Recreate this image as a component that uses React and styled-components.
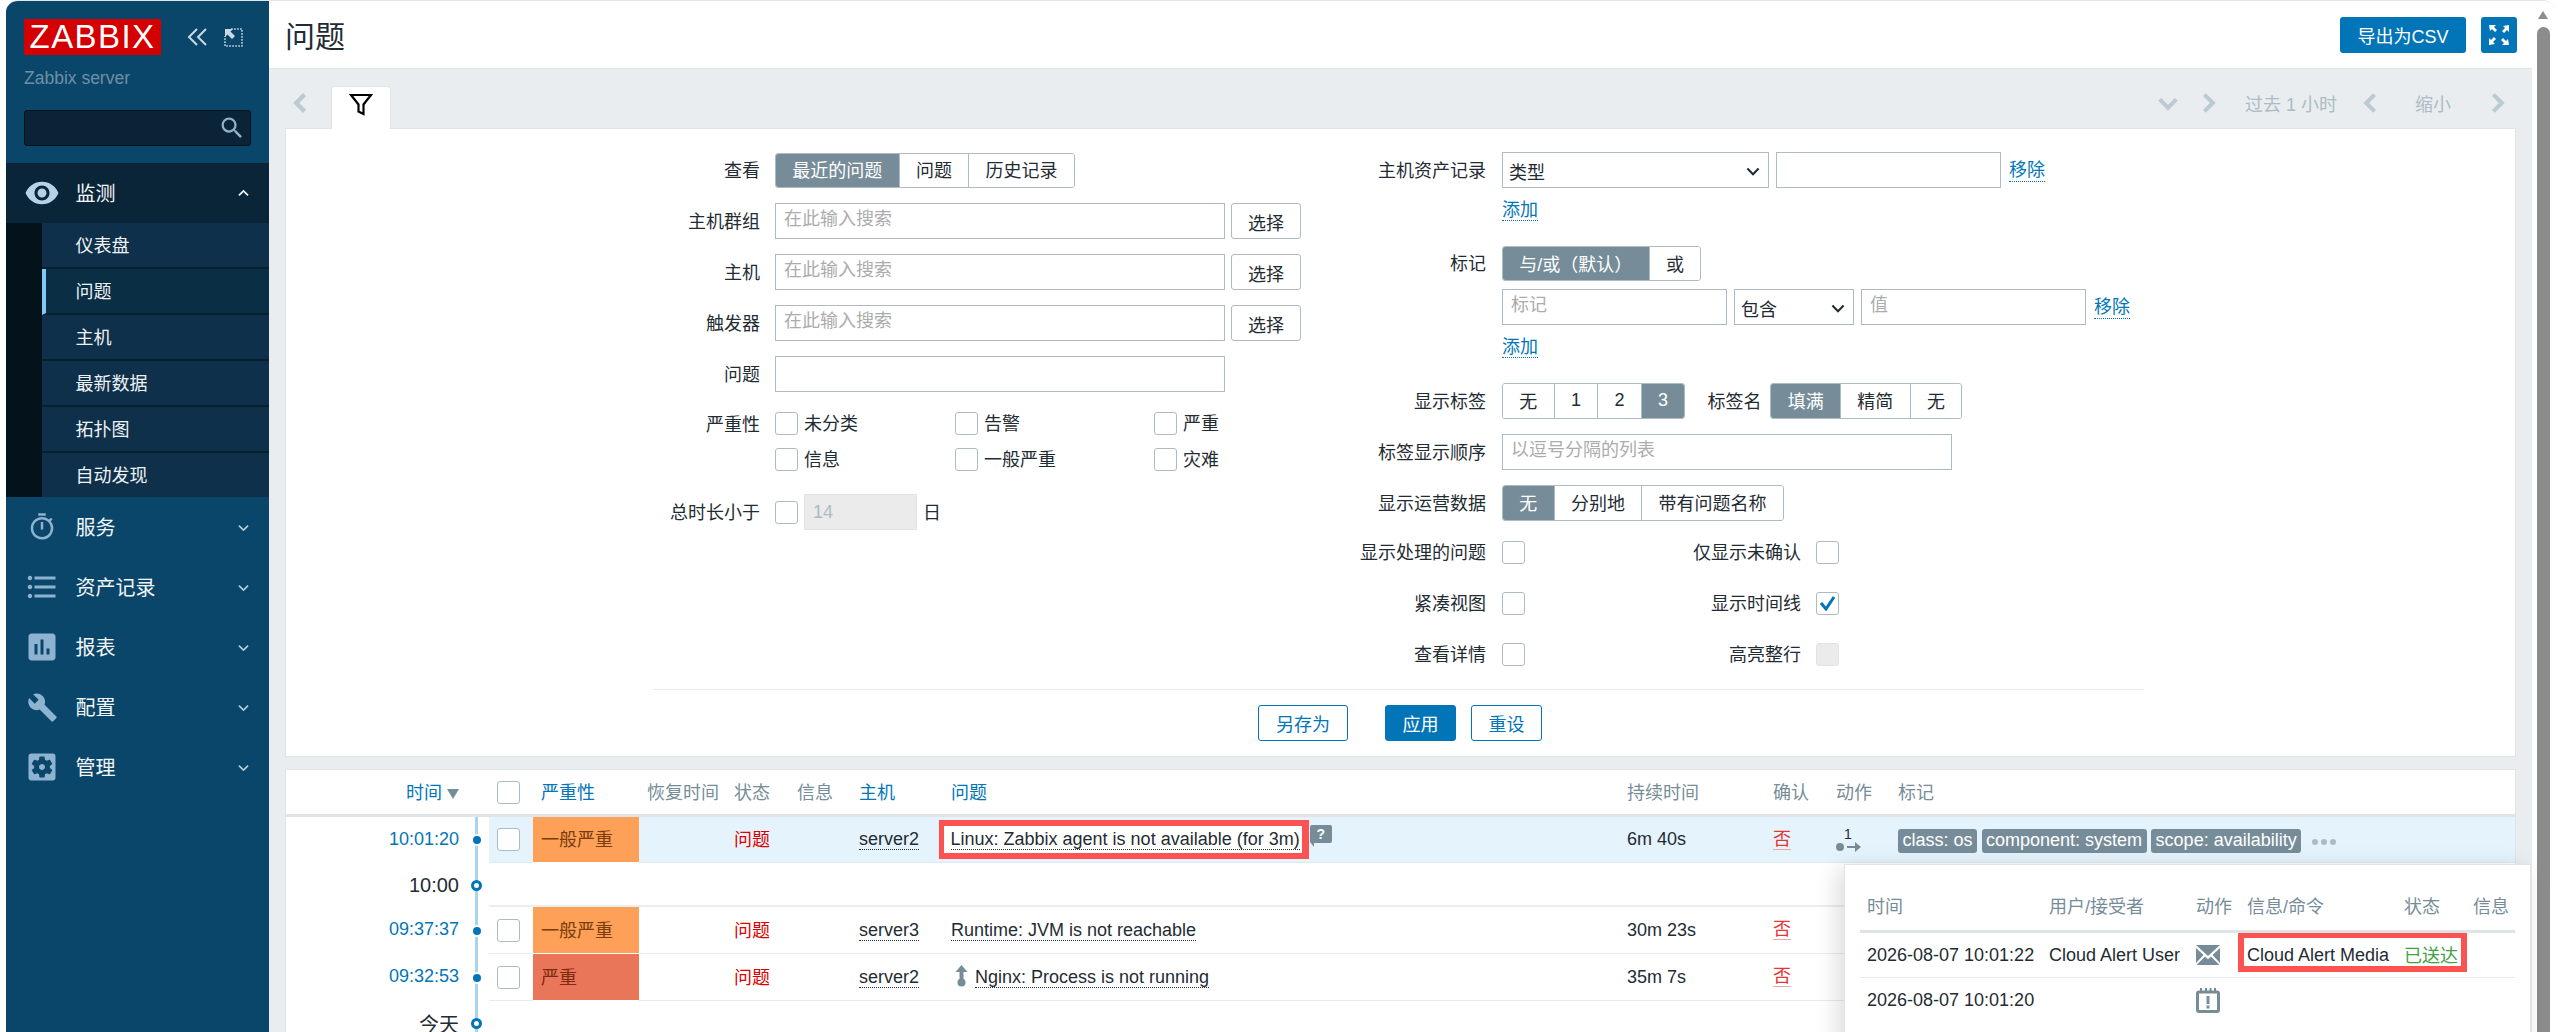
import React from "react";
import styled, { createGlobalStyle } from "styled-components";
import {
  MdVisibility,
  MdOutlineTimer,
  MdFormatListBulleted,
  MdAssessment,
  MdBuild,
  MdSettingsApplications,
  MdSearch,
} from "react-icons/md";

const Global = createGlobalStyle`
  html, body { margin: 0; padding: 0; background: #fff; overflow: hidden; }
  body { font-family: "Liberation Sans", "Noto Sans CJK SC", sans-serif; font-size: 18px; color: #1f2c33; }
  * { box-sizing: border-box; }
`;

const Win = styled.div`
  display: flex;
  height: 1032px;
  margin: 0 4px 0 6px;
  border-top: 1px solid #e3e7ea;
  border-radius: 12px 12px 0 0;
  overflow: hidden;
  position: relative;
`;

/* Sidebar */
const Side = styled.aside`
  width: 263px;
  flex: none;
  background: #0a466a;
  display: flex;
  flex-direction: column;
`;
const Brand = styled.div`
  height: 162px;
  padding: 18px 18px 0 18px;
`;
const BrandTop = styled.div`
  display: flex;
  align-items: center;
`;
const Logo = styled.div`
  width: 137px;
  height: 36px;
  background: #d40000;
  color: #fff;
  font-size: 33px;
  line-height: 36px;
  letter-spacing: 1.4px;
  text-align: center;
`;
const Server = styled.div`
  margin-top: 13px;
  color: #6f8fa6;
  font-size: 17.5px;
  line-height: 20px;
`;
const Search = styled.div`
  margin-top: 22px;
  width: 227px;
  height: 36px;
  background: #0a2336;
  border: 1px solid #02101a;
  border-radius: 3px;
  display: flex;
  justify-content: flex-end;
  align-items: center;
  padding-right: 4px;
  color: #8fb0c6;
`;
const MenuRow = styled.div`
  height: 60px;
  flex: none;
  display: flex;
  align-items: center;
  padding-left: 16px;
  padding-right: 19px;
  background: ${(p) => (p.$open ? "#0a2537" : "transparent")};
  color: #f2f5f7;
  font-size: 20px;
`;
const MenuIcon = styled.span`
  width: 40px;
  display: flex;
  justify-content: center;
  align-items: center;
  margin-right: 13.5px;
  color: ${(p) => (p.$open ? "#b5d3e8" : "#8db3d0")};
`;
const MenuText = styled.span`
  flex: 1;
  padding-bottom: 2px;
`;
const Sub = styled.div`
  background: #04131b;
  padding-left: 36px;
`;
const SubItem = styled.div`
  height: ${(p) => (p.$last ? "44px" : "46px")};
  display: flex;
  align-items: center;
  padding-left: ${(p) => (p.$on ? "29.500px" : "33.500px")};
  padding-bottom: 3px;
  background: ${(p) => (p.$on ? "#0a2e44" : "#0e304a")};
  border-left: ${(p) => (p.$on ? "4px solid #84c8f8" : "0")};
  border-bottom: ${(p) => (p.$last ? "0" : "2px solid #06202f")};
  color: #eef2f5;
  font-size: 18px;
`;

/* Main */
const Main = styled.main`
  flex: 1;
  min-width: 0;
  display: flex;
  flex-direction: column;
  background: #e9edf0;
`;
const Header = styled.header`
  height: 68px;
  flex: none;
  background: #fff;
  border-bottom: 1px solid #dfe4e7;
  display: flex;
  align-items: center;
  padding: 0 15px 0 16px;
  gap: 15px;
`;
const Title = styled.h1`
  flex: 1;
  margin: 0 0 2px;
  font-size: 30px;
  font-weight: 400;
  color: #1f2c33;
`;
const PrimaryBtn = styled.button`
  height: 36px;
  width: ${(p) => p.$w || "auto"};
  padding: 0;
  border: 0;
  border-radius: 3px;
  background: #0275b8;
  color: #fff;
  font: inherit;
  font-size: 18px;
  display: flex;
  align-items: center;
  justify-content: center;
`;
const Content = styled.div`
  flex: 1;
  padding: 0 16px;
  min-height: 0;
`;
const TabRow = styled.div`
  height: 59px;
  padding-top: 17px;
  display: flex;
  align-items: flex-start;
`;
const TabArrow = styled.span`
  width: 46px;
  height: 34px;
  display: flex;
  align-items: center;
  padding-left: 4px;
`;
const Tab = styled.div`
  width: 60px;
  height: 43px;
  margin-bottom: -1px;
  background: #fff;
  border: 1px solid #dfe4e7;
  border-bottom: 0;
  border-radius: 3px 3px 0 0;
  display: flex;
  justify-content: center;
  padding-top: 5px;
  position: relative;
  z-index: 1;
`;
const TimeNav = styled.div`
  margin-left: auto;
  height: 34px;
  display: flex;
  align-items: center;
  padding-right: 7px;
  color: #acbbc4;
  font-size: 18px;
`;
const NavItem = styled.span`
  margin-left: ${(p) => p.$ml || 0}px;
  display: flex;
  align-items: center;
  padding-bottom: 1px;
`;
const FilterPanel = styled.section`
  height: 629px;
  background: #fff;
  border: 1px solid #dfe4e7;
  display: flex;
  flex-direction: column;
`;
const Columns = styled.div`
  display: grid;
  grid-template-columns: 666px 1fr;
  padding: 23px 0 0 354px;
  height: 560px;
`;
const Col = styled.div`
  display: flex;
  flex-direction: column;
`;
const FormRow = styled.div`
  display: grid;
  grid-template-columns: ${(p) => (p.$right ? "180px 1fr" : "120px 1fr")};
  column-gap: ${(p) => (p.$right ? "16px" : "15px")};
  margin-top: ${(p) => p.$mt || 0}px;
  min-height: ${(p) => p.$h || 36}px;
  align-items: ${(p) => (p.$top ? "start" : "center")};
`;
const Label = styled.label`
  text-align: right;
  font-size: 18px;
  padding-bottom: 3px;
  line-height: ${(p) => (p.$lh ? p.$lh + "px" : "normal")};
  color: #1f2c33;
`;
const Ctrl = styled.div`
  display: flex;
  align-items: center;
  gap: ${(p) => p.$gap ?? 6}px;
`;
const Seg = styled.div`
  display: inline-flex;
  height: ${(p) => p.$h || 36}px;
  border: 1px solid #acbbc4;
  border-radius: 3px;
  overflow: hidden;
`;
const SegItem = styled.span`
  padding: 0 ${(p) => p.$pad ?? 16.3}px 2px;
  display: flex;
  align-items: center;
  font-size: 18px;
  background: ${(p) => (p.$on ? "#768d99" : "#fff")};
  color: ${(p) => (p.$on ? "#fff" : "#1f2c33")};
  border-right: 1px solid #acbbc4;
  &:last-child { border-right: 0; }
`;
const Input = styled.input`
  width: ${(p) => p.$w}px;
  height: 36px;
  padding: 0 8px 3px;
  border: 1px solid #acbbc4;
  background: #fff;
  font: inherit;
  font-size: 18px;
  color: #1f2c33;
  &::placeholder { color: #acacac; opacity: 1; }
  &:disabled { background: #ebebeb; border-color: #dfe4e7; color: #acbbc4; padding-bottom: 0; }
`;
const GhostBtn = styled.button`
  width: ${(p) => p.$w || 70}px;
  height: 36px;
  padding: 2px 0 0;
  border: 1px solid #acbbc4;
  border-radius: 3px;
  background: #fff;
  font: inherit;
  font-size: 18px;
  color: #1f2c33;
`;
const Box = styled.span`
  width: 23px;
  height: 23px;
  flex: none;
  border: 1px solid #acbbc4;
  border-radius: 3px;
  background: ${(p) => (p.$off ? "#ebebeb" : "#fff")};
  ${(p) => (p.$off ? "border-color:#dfe4e7;" : "")}
  display: flex;
  align-items: center;
  justify-content: center;
`;
const SevGrid = styled.div`
  display: grid;
  grid-template-columns: 180px 199px 1fr;
  row-gap: 13px;
  padding-top: 5px;
`;
const SevItem = styled.span`
  display: flex;
  align-items: center;
  gap: 6px;
  height: 23px;
  font-size: 18px;
`;
const SevText = styled.span`
  padding-bottom: 3px;
`;
const SelectBox = styled.div`
  width: ${(p) => p.$w}px;
  height: 36px;
  border: 1px solid #acbbc4;
  background: #fff;
  display: flex;
  align-items: center;
  justify-content: space-between;
  padding: 2px 7px 0 6px;
  font-size: 18px;
`;
const Link = styled.a`
  color: #0275b8;
  font-size: 18px;
  line-height: 22px;
  border-bottom: 1px dotted #0275b8;
  margin-left: ${(p) => p.$ml || 0}px;
`;
const AddRow = styled.div`
  margin: ${(p) => p.$mt}px 0 0 196px;
  height: 22px;
  display: flex;
`;
const InlineLabel = styled.span`
  font-size: 18px;
  padding-bottom: 3px;
  margin: 0 9px 0 22px;
`;
const CheckRow = styled.div`
  display: flex;
  width: 337px;
  align-items: center;
  height: 35px;
`;
const Check2Label = styled.span`
  flex: 1;
  text-align: right;
  padding: 0 15px 3px 0;
  font-size: 18px;
`;
const Footer = styled.div`
  width: 1491px;
  margin-left: 367px;
  border-top: 1px solid #e9ebed;
  padding: 15px 0 0 3px;
  display: flex;
  justify-content: center;
`;
const OutBtn = styled.button`
  width: ${(p) => p.$w}px;
  height: 36px;
  padding: 0;
  margin-left: ${(p) => p.$ml || 0}px;
  border: 1px solid #0275b8;
  border-radius: 3px;
  background: ${(p) => (p.$fill ? "#0275b8" : "#fff")};
  color: ${(p) => (p.$fill ? "#fff" : "#0275b8")};
  font: inherit;
  font-size: 18px;
`;

/* Problem list */
const ListPanel = styled.section`
  margin-top: 12px;
  height: 300px;
  background: #fff;
  border: 1px solid #dfe4e7;
  border-bottom: 0;
  position: relative;
`;
const COLS = "173px 30px 44px 106px 87px 63px 62px 92px 676px 146px 63px 62px 1fr";
const HeadRow = styled.div`
  display: grid;
  grid-template-columns: ${COLS};
  height: 47px;
  border-bottom: 3px solid #dfe4e7;
  align-items: center;
`;
const Th = styled.span`
  padding-left: ${(p) => (p.$flush ? 0 : 8)}px;
  padding-bottom: 2px;
  font-size: 18px;
  color: ${(p) => (p.$sort ? "#0275b8" : "#768d99")};
  white-space: nowrap;
  ${(p) => (p.$end ? "text-align:right;" : "")}
`;
const Row = styled.div`
  display: grid;
  grid-template-columns: ${COLS};
  height: ${(p) => p.$h}px;
  align-items: stretch;
`;
const TimeCell = styled.span`
  text-align: right;
  align-self: center;
  font-size: ${(p) => (p.$big ? 20 : 18)}px;
  padding-bottom: ${(p) => (p.$big ? 0 : 2)}px;
  color: ${(p) => (p.$big ? "#1f2c33" : "#0275b8")};
`;
const Line = styled.span`
  position: relative;
  display: flex;
  align-items: center;
  &::before {
    content: "";
    position: absolute;
    left: 16px;
    top: 0;
    bottom: 0;
    width: 3px;
    background: #a9d4ec;
  }
`;
const Dot = styled.i`
  position: relative;
  margin-left: ${(p) => (p.$big ? 12 : 13.5)}px;
  width: ${(p) => (p.$big ? 11 : 8)}px;
  height: ${(p) => (p.$big ? 11 : 8)}px;
  border-radius: 50%;
  background: ${(p) => (p.$big ? "#fff" : "#0275b8")};
  border: ${(p) => (p.$big ? "3px solid #0275b8" : "0")};
  box-shadow: ${(p) => (p.$big ? "none" : "0 0 0 2px #fff")};
`;
const Cell = styled.span`
  padding-left: 8px;
  display: flex;
  align-items: center;
  font-size: 18px;
  white-space: nowrap;
  background: ${(p) => (p.$hl ? "#e5f3fd" : "transparent")};
  border-bottom: 1px solid ${(p) => (p.$hl ? "#dfe9f0" : "#e8ebed")};
  color: ${(p) => p.$color || "inherit"};
`;
const CjkText = styled.span`
  padding-bottom: 3px;
`;
const BlankCell = styled.span`
  grid-column: 3 / -1;
  border-bottom: 2px solid #ebeef0;
`;
const SevCell = styled(Cell)`
  background: ${(p) => p.$bg};
  color: ${(p) => p.$fg};
  border-bottom: 1px solid #fff;
`;
const Dotted = styled.a`
  border-bottom: 1px dotted #1f2c33;
  line-height: 20px;
  color: #1f2c33;
`;
const RedMark = styled.span`
  display: inline-flex;
  align-items: center;
  height: 39px;
  margin-left: -12px;
  padding: 0 2px 0 6.5px;
  border: solid #fd5252;
  border-width: 6px 7px 6px 5px;
  background: #fff;
`;
const Hint = styled.span`
  position: relative;
  margin: -12px 0 0 1px;
  width: 22px;
  height: 18px;
  background: #768d99;
  color: #fff;
  border-radius: 2px;
  font-size: 14px;
  font-weight: 700;
  line-height: 18px;
  text-align: center;
  &::after {
    content: "";
    position: absolute;
    left: 0;
    bottom: -4px;
    border-top: 5px solid #768d99;
    border-left: 4px solid transparent;
  }
`;
const No = styled.span`
  color: #e33734;
  border-bottom: 1px solid #e9a9a8;
  line-height: 20px;
  margin-top: -1px;
`;
const Tag = styled.span`
  height: 24px;
  padding: 0 4.5px;
  margin-right: 4.5px;
  margin-top: 3px;
  background: #768d99;
  color: #fff;
  border-radius: 3px;
  font-size: 18px;
  line-height: 22px;
`;
const Act = styled.span`
  width: 24px;
  display: flex;
  flex-direction: column;
  align-items: center;
  font-size: 14px;
  line-height: 14px;
  color: #1f2c33;
`;
const More = styled.span`
  display: flex;
  gap: 3px;
  margin-left: 6px;
  margin-top: 5px;
`;
const MoreDot = styled.i`
  width: 6px;
  height: 6px;
  border-radius: 50%;
  background: #acbbc4;
`;

/* Popup */
const POP = "182px 147px 51px 157px 69px 50px";
const Popup = styled.div`
  position: absolute;
  left: 1558px;
  top: 94px;
  width: 687px;
  height: 240px;
  background: #fff;
  border: 1px solid #dfe4e7;
  padding: 25px 15px 0 15px;
  box-shadow: -6px 4px 22px rgba(0, 0, 0, 0.14);
  z-index: 3;
`;
const PopHead = styled.div`
  display: grid;
  grid-template-columns: ${POP};
  height: 43px;
  padding: 2px 0 0 7px;
  border-bottom: 3px solid #dfe4e7;
  color: #768d99;
  font-size: 18px;
`;
const PopHeadCell = styled.span`
  white-space: nowrap;
`;
const PopRow = styled.div`
  display: grid;
  grid-template-columns: ${POP};
  height: ${(p) => p.$h}px;
  align-items: center;
  padding-left: 7px;
  border-bottom: ${(p) => (p.$line ? "1px solid #e8ebed" : "0")};
  font-size: 18px;
  white-space: nowrap;
`;
const Sent = styled.span`
  color: #3fa33f;
  padding-bottom: 3px;
`;
const PopRed = styled.div`
  position: absolute;
  left: 393px;
  top: 68px;
  width: 229px;
  height: 39px;
  border: 6px solid #fd5252;
  border-width: 5px 6px 6px 6px;
  pointer-events: none;
`;

/* Scrollbar */
const Scroll = styled.div`
  width: 23px;
  flex: none;
  background: #fff;
  padding-left: 5px;
  display: flex;
  flex-direction: column;
`;
const ScrollUp = styled.span`
  margin: 10px 0 0 1px;
  width: 0;
  height: 0;
  border-left: 5.5px solid transparent;
  border-right: 5.5px solid transparent;
  border-bottom: 8px solid #8c8c8c;
`;
const Thumb = styled.span`
  margin-top: 8px;
  width: 13px;
  flex: 1;
  background: #8c8c8c;
  border-radius: 7px 7px 0 0;
`;

const Chev = ({ dir = "down", c = "#bccad2", s = 24, w = 3.4 }) => {
  const d = {
    down: "M3 7l7 7 7-7",
    up: "M3 13l7-7 7 7",
    left: "M13 3l-7 7 7 7",
    right: "M7 3l7 7-7 7",
  }[dir];
  return (
    <svg width={s} height={s} viewBox="0 0 20 20" fill="none" stroke={c} strokeWidth={w}>
      <path d={d} />
    </svg>
  );
};

const menus = [
  { t: "服务", I: MdOutlineTimer, s: 30 },
  { t: "资产记录", I: MdFormatListBulleted, s: 36 },
  { t: "报表", I: MdAssessment, s: 36 },
  { t: "配置", I: MdBuild, s: 31 },
  { t: "管理", I: MdSettingsApplications, s: 36 },
];
const subs = ["仪表盘", "问题", "主机", "最新数据", "拓扑图", "自动发现"];

const MenuChev = ({ dir }) => <Chev dir={dir} c={dir === "up" ? "#f2f5f7" : "#b5cad8"} s={13} w={2.6} />;

export default function App() {
  return (
    <>
      <Global />
      <Win>
        <Side>
          <Brand>
            <BrandTop>
              <Logo>ZABBIX</Logo>
              <svg style={{ marginLeft: 25 }} width="22" height="20" viewBox="0 0 22 20" fill="none" stroke="#c9d8e2" strokeWidth="2">
                <path d="M11 2L3 10l8 8M20 2l-8 8 8 8" />
              </svg>
              <svg style={{ marginLeft: 16 }} width="19" height="19" viewBox="0 0 19 19" fill="none">
                <path d="M7 1h11v17H1V8" stroke="#b9ccd9" strokeWidth="1.6" strokeDasharray="1.8 1.2" />
                <path d="M1 1h8L6.5 3.5 11 8l-3 3-4.5-4.5L1 9z" fill="#c9d8e2" />
              </svg>
            </BrandTop>
            <Server>Zabbix server</Server>
            <Search>
              <MdSearch size={28} />
            </Search>
          </Brand>
          <MenuRow $open>
            <MenuIcon $open>
              <MdVisibility size={36} />
            </MenuIcon>
            <MenuText>监测</MenuText>
            <MenuChev dir="up" />
          </MenuRow>
          <Sub>
            {subs.map((s, i) => (
              <SubItem key={s} $on={i === 1} $last={i === subs.length - 1}>
                {s}
              </SubItem>
            ))}
          </Sub>
          {menus.map(({ t, I, s }) => (
            <MenuRow key={t}>
              <MenuIcon>
                <I size={s} />
              </MenuIcon>
              <MenuText>{t}</MenuText>
              <MenuChev dir="down" />
            </MenuRow>
          ))}
        </Side>
        <Main>
          <Header>
            <Title>问题</Title>
            <PrimaryBtn $w="126px">导出为CSV</PrimaryBtn>
            <PrimaryBtn $w="36px">
              <svg width="22" height="22" viewBox="0 0 22 22" fill="#fff">
                <path d="M1 1h7L6 3l3 3-2 2-3-3-2 2zM21 1v7l-2-2-3 3-2-2 3-3-2-2zM1 21v-7l2 2 3-3 2 2-3 3 2 2zM21 21h-7l2-2-3-3 2-2 3 3 2-2z" />
              </svg>
            </PrimaryBtn>
          </Header>
          <Content>
            <TabRow>
              <TabArrow>
                <Chev dir="left" s={24} w={3.6} />
              </TabArrow>
              <Tab>
                <svg width="24" height="24" viewBox="0 0 24 24" fill="none" stroke="#000" strokeWidth="2.2">
                  <path d="M2 3h20l-7.500 9.500V22l-5-2.500v-7z" />
                </svg>
              </Tab>
              <TimeNav>
                <Chev dir="down" />
                <NavItem $ml={16}>
                  <Chev dir="right" />
                </NavItem>
                <NavItem $ml={25}>过去 1 小时</NavItem>
                <NavItem $ml={22}>
                  <Chev dir="left" />
                </NavItem>
                <NavItem $ml={32}>缩小</NavItem>
                <NavItem $ml={34}>
                  <Chev dir="right" />
                </NavItem>
              </TimeNav>
            </TabRow>
            <FilterPanel>
              <Columns>
                <Col>
                  <FormRow>
                    <Label>查看</Label>
                    <Ctrl>
                      <Seg $h={35}>
                        <SegItem $on>最近的问题</SegItem>
                        <SegItem>问题</SegItem>
                        <SegItem>历史记录</SegItem>
                      </Seg>
                    </Ctrl>
                  </FormRow>
                  {["主机群组", "主机", "触发器"].map((l) => (
                    <FormRow key={l} $mt={15}>
                      <Label>{l}</Label>
                      <Ctrl>
                        <Input $w={450} placeholder="在此输入搜索" />
                        <GhostBtn>选择</GhostBtn>
                      </Ctrl>
                    </FormRow>
                  ))}
                  <FormRow $mt={15}>
                    <Label>问题</Label>
                    <Ctrl>
                      <Input $w={450} />
                    </Ctrl>
                  </FormRow>
                  <FormRow $mt={15} $h={72} $top>
                    <Label $lh={36}>严重性</Label>
                    <SevGrid>
                      {["未分类", "告警", "严重", "信息", "一般严重", "灾难"].map((t) => (
                        <SevItem key={t}>
                          <Box />
                          <SevText>{t}</SevText>
                        </SevItem>
                      ))}
                    </SevGrid>
                  </FormRow>
                  <FormRow $mt={15}>
                    <Label>总时长小于</Label>
                    <Ctrl>
                      <Box />
                      <Input $w={113} disabled value="14" readOnly />
                      <SevText>日</SevText>
                    </Ctrl>
                  </FormRow>
                </Col>
                <Col>
                  <FormRow $right>
                    <Label>主机资产记录</Label>
                    <Ctrl $gap={7}>
                      <SelectBox $w={267}>
                        类型
                        <Chev dir="down" c="#1f2c33" s={16} w={2.6} />
                      </SelectBox>
                      <Input $w={225} />
                      <Link $ml={1}>移除</Link>
                    </Ctrl>
                  </FormRow>
                  <AddRow $mt={11}>
                    <Link>添加</Link>
                  </AddRow>
                  <FormRow $right $mt={25} $h={35}>
                    <Label>标记</Label>
                    <Ctrl>
                      <Seg $h={35}>
                        <SegItem $on>与/或（默认）</SegItem>
                        <SegItem>或</SegItem>
                      </Seg>
                    </Ctrl>
                  </FormRow>
                  <FormRow $right $mt={8}>
                    <span />
                    <Ctrl $gap={7}>
                      <Input $w={225} placeholder="标记" />
                      <SelectBox $w={120}>
                        包含
                        <Chev dir="down" c="#1f2c33" s={16} w={2.6} />
                      </SelectBox>
                      <Input $w={225} placeholder="值" />
                      <Link $ml={1}>移除</Link>
                    </Ctrl>
                  </FormRow>
                  <AddRow $mt={11}>
                    <Link>添加</Link>
                  </AddRow>
                  <FormRow $right $mt={25}>
                    <Label>显示标签</Label>
                    <Ctrl $gap={0}>
                      <Seg>
                        <SegItem>无</SegItem>
                        <SegItem>1</SegItem>
                        <SegItem>2</SegItem>
                        <SegItem $on>3</SegItem>
                      </Seg>
                      <InlineLabel>标签名</InlineLabel>
                      <Seg>
                        <SegItem $on>填满</SegItem>
                        <SegItem>精简</SegItem>
                        <SegItem>无</SegItem>
                      </Seg>
                    </Ctrl>
                  </FormRow>
                  <FormRow $right $mt={15}>
                    <Label>标签显示顺序</Label>
                    <Ctrl>
                      <Input $w={450} placeholder="以逗号分隔的列表" />
                    </Ctrl>
                  </FormRow>
                  <FormRow $right $mt={15}>
                    <Label>显示运营数据</Label>
                    <Ctrl>
                      <Seg>
                        <SegItem $on>无</SegItem>
                        <SegItem>分别地</SegItem>
                        <SegItem>带有问题名称</SegItem>
                      </Seg>
                    </Ctrl>
                  </FormRow>
                  <FormRow $right $mt={14} $h={35}>
                    <Label>显示处理的问题</Label>
                    <CheckRow>
                      <Box />
                      <Check2Label>仅显示未确认</Check2Label>
                      <Box />
                    </CheckRow>
                  </FormRow>
                  <FormRow $right $mt={16} $h={35}>
                    <Label>紧凑视图</Label>
                    <CheckRow>
                      <Box />
                      <Check2Label>显示时间线</Check2Label>
                      <Box>
                        <svg width="17" height="15" viewBox="0 0 17 15" fill="none" stroke="#0275b8" strokeWidth="3">
                          <path d="M2 7l5 6 8-12" />
                        </svg>
                      </Box>
                    </CheckRow>
                  </FormRow>
                  <FormRow $right $mt={16} $h={35}>
                    <Label>查看详情</Label>
                    <CheckRow>
                      <Box />
                      <Check2Label>高亮整行</Check2Label>
                      <Box $off />
                    </CheckRow>
                  </FormRow>
                </Col>
              </Columns>
              <Footer>
                <OutBtn $w={90}>另存为</OutBtn>
                <OutBtn $w={71} $ml={37} $fill>
                  应用
                </OutBtn>
                <OutBtn $w={71} $ml={15}>
                  重设
                </OutBtn>
              </Footer>
            </FilterPanel>
            <ListPanel>
              <HeadRow>
                <Th $flush $end $sort>
                  时间{" "}
                  <svg width="12" height="10" viewBox="0 0 12 10" fill="#768d99">
                    <path d="M0 0h12L6 10z" />
                  </svg>
                </Th>
                <span />
                <Th>
                  <Box style={{ display: "block", marginTop: 2 }} />
                </Th>
                <Th $sort>严重性</Th>
                <Th>恢复时间</Th>
                <Th>状态</Th>
                <Th>信息</Th>
                <Th $sort>主机</Th>
                <Th $sort>问题</Th>
                <Th>持续时间</Th>
                <Th>确认</Th>
                <Th>动作</Th>
                <Th>标记</Th>
              </HeadRow>
              <Row $h={46}>
                <TimeCell>10:01:20</TimeCell>
                <Line>
                  <Dot />
                </Line>
                <Cell $hl>
                  <Box />
                </Cell>
                <SevCell $bg="#ffa059" $fg="#7a3c08">
                  <CjkText>一般严重</CjkText>
                </SevCell>
                <Cell $hl />
                <Cell $hl $color="#dc0000">
                  <CjkText>问题</CjkText>
                </Cell>
                <Cell $hl />
                <Cell $hl>
                  <Dotted>server2</Dotted>
                </Cell>
                <Cell $hl>
                  <RedMark>
                    <Dotted>Linux: Zabbix agent is not available (for 3m)</Dotted>
                  </RedMark>
                  <Hint>?</Hint>
                </Cell>
                <Cell $hl>6m 40s</Cell>
                <Cell $hl>
                  <No>否</No>
                </Cell>
                <Cell $hl>
                  <Act>
                    1
                    <svg width="26" height="12" viewBox="0 0 26 12" fill="#768d99">
                      <circle cx="5" cy="6" r="4" />
                      <path d="M12 5h8V1l6 5-6 5V7h-8z" />
                    </svg>
                  </Act>
                </Cell>
                <Cell $hl>
                  <Tag>class: os</Tag>
                  <Tag>component: system</Tag>
                  <Tag>scope: availability</Tag>
                  <More>
                    <MoreDot />
                    <MoreDot />
                    <MoreDot />
                  </More>
                </Cell>
              </Row>
              <Row $h={44}>
                <TimeCell $big>10:00</TimeCell>
                <Line>
                  <Dot $big />
                </Line>
                <BlankCell />
              </Row>
              {[
                ["09:37:37", "一般严重", "#ffa059", "#7a3c08", "server3", "Runtime: JVM is not reachable", "30m 23s", false],
                ["09:32:53", "严重", "#e97659", "#7e2a10", "server2", "Nginx: Process is not running", "35m 7s", true],
              ].map(([time, sev, bg, fg, host, prob, dur, up]) => (
                <Row key={time} $h={47}>
                  <TimeCell>{time}</TimeCell>
                  <Line>
                    <Dot />
                  </Line>
                  <Cell>
                    <Box />
                  </Cell>
                  <SevCell $bg={bg} $fg={fg}>
                    <CjkText>{sev}</CjkText>
                  </SevCell>
                  <Cell />
                  <Cell $color="#dc0000">
                    <CjkText>问题</CjkText>
                  </Cell>
                  <Cell />
                  <Cell>
                    <Dotted>{host}</Dotted>
                  </Cell>
                  <Cell>
                    {up && (
                      <svg style={{ margin: "-2px 7px 0 4px" }} width="13" height="22" viewBox="0 0 13 22" fill="#768d99">
                        <path d="M6.500 0l6 7H8.500v8h-4V7H.5z" />
                        <circle cx="6.500" cy="17.500" r="4" />
                      </svg>
                    )}
                    <Dotted>{prob}</Dotted>
                  </Cell>
                  <Cell>{dur}</Cell>
                  <Cell>
                    <No>否</No>
                  </Cell>
                  <Cell />
                  <Cell />
                </Row>
              ))}
              <Row $h={44}>
                <TimeCell $big>今天</TimeCell>
                <Line>
                  <Dot $big />
                </Line>
              </Row>
              <Popup>
                <PopHead>
                  <PopHeadCell>时间</PopHeadCell>
                  <PopHeadCell>用户/接受者</PopHeadCell>
                  <PopHeadCell>动作</PopHeadCell>
                  <PopHeadCell>信息/命令</PopHeadCell>
                  <PopHeadCell>状态</PopHeadCell>
                  <PopHeadCell>信息</PopHeadCell>
                </PopHead>
                <PopRow $h={45} $line>
                  <span>2026-08-07 10:01:22</span>
                  <span>Cloud Alert User</span>
                  <svg width="24" height="20" viewBox="0 0 24 20" fill="#768d99">
                    <path d="M0 0h24L12 11zM0 3l7.500 7L0 18zM24 3l-7.500 7L24 18zM9 11.500l3 2.800 3-2.800 8.500 8.500H.5z" />
                  </svg>
                  <span>Cloud Alert Media</span>
                  <Sent>已送达</Sent>
                  <span />
                </PopRow>
                <PopRow $h={44}>
                  <span>2026-08-07 10:01:20</span>
                  <span />
                  <svg width="24" height="25" viewBox="0 0 24 25" fill="none">
                    <rect x="1.500" y="4" width="21" height="19.500" rx="1.500" stroke="#768d99" strokeWidth="3" />
                    <path d="M5 0v4M10 0v4M14.500 0v4M19 0v4" stroke="#768d99" strokeWidth="2" />
                    <path d="M12 8v8M12 17.500v3" stroke="#768d99" strokeWidth="3" />
                  </svg>
                  <span />
                  <span />
                  <span />
                </PopRow>
                <PopRed />
              </Popup>
            </ListPanel>
          </Content>
        </Main>
        <Scroll>
          <ScrollUp />
          <Thumb />
        </Scroll>
      </Win>
    </>
  );
}
